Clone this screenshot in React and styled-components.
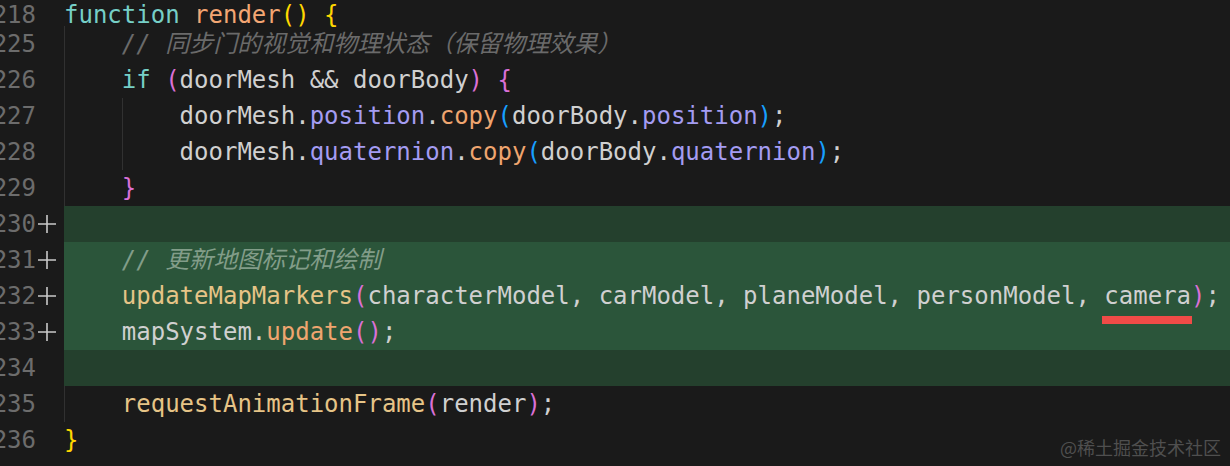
import React from 'react';
import styled, { createGlobalStyle } from 'styled-components';

const GlobalStyle = createGlobalStyle`
  html, body {
    margin: 0;
    padding: 0;
    background: #1a1a1a;
    overflow: hidden;
  }
`;

const colors = {
  fg: '#d0d0d0',
  kw: '#76cfc7',
  fn: '#f3a673',
  method: '#efa56f',
  call: '#e6c487',
  prop: '#a49cf2',
  b1: '#ffd700',
  b2: '#da70d6',
  b3: '#179fff',
};

const Editor = styled.div`
  position: relative;
  width: 1230px;
  height: 466px;
  overflow: hidden;
  background: #1a1a1a;
  font-family: 'DejaVu Sans Mono', 'Noto Sans CJK SC', monospace;
  font-size: 24px;
  color: ${colors.fg};
`;

const Line = styled.div`
  display: flex;
  height: ${(p) => (p.$sticky ? 26 : 36)}px;
  line-height: ${(p) => (p.$sticky ? 30 : 36)}px;
  white-space: pre;
`;

const Gutter = styled.div`
  display: flex;
  width: 64px;
  flex-shrink: 0;
`;

const Num = styled.div`
  display: flex;
  justify-content: flex-end;
  width: 36px;
  color: #6c6c6c;
`;

const Marker = styled.div`
  display: flex;
  align-items: center;
  justify-content: center;
  width: 22px;
`;

const Code = styled.div`
  flex: 1;
  background: ${(p) =>
    p.$diff === 'add' ? '#2b553a' : p.$diff === 'dim' ? '#24402d' : 'transparent'};
`;

const Indent = styled.span`
  display: inline-block;
  vertical-align: top;
  width: 4ch;
  height: 36px;
  box-sizing: border-box;
  border-left: 1px solid ${(p) => (p.$on ? 'rgba(255,255,255,0.1)' : 'transparent')};
`;

const Tok = styled.span`
  color: ${(p) => colors[p.$t] || colors.fg};
`;

const Comment = styled.span`
  font-style: italic;
  color: ${(p) => (p.$onGreen ? '#829d89' : '#6a6a6a')};
`;

const Mark = styled.span`
  position: relative;
  display: inline-block;
  vertical-align: top;
  height: 36px;

  &::after {
    content: '';
    position: absolute;
    left: -2px;
    right: -1px;
    top: 38px;
    height: 8px;
    background: #f04b47;
  }
`;

const Watermark = styled.div`
  position: absolute;
  right: 9px;
  bottom: 6px;
  font-family: 'Noto Sans CJK SC', sans-serif;
  font-size: 18px;
  color: #4f4f4f;
`;

function Plus() {
  return (
    <svg width="18" height="18" viewBox="0 0 18 18">
      <path d="M0 9h18M9 0v18" stroke="#c9c9c9" strokeWidth="1.6" fill="none" />
    </svg>
  );
}

const lines = [
  { n: 218, sticky: true, indent: 0, tokens: [['kw', 'function'], ['fg', ' '], ['fn', 'render'], ['b1', '()'], ['fg', ' '], ['b1', '{']] },
  { n: 225, indent: 1, tokens: [['cm', '// 同步门的视觉和物理状态（保留物理效果）']] },
  { n: 226, indent: 1, tokens: [['kw', 'if'], ['fg', ' '], ['b2', '('], ['fg', 'doorMesh && doorBody'], ['b2', ')'], ['fg', ' '], ['b2', '{']] },
  { n: 227, indent: 2, tokens: [['fg', 'doorMesh.'], ['prop', 'position'], ['fg', '.'], ['method', 'copy'], ['b3', '('], ['fg', 'doorBody.'], ['prop', 'position'], ['b3', ')'], ['fg', ';']] },
  { n: 228, indent: 2, tokens: [['fg', 'doorMesh.'], ['prop', 'quaternion'], ['fg', '.'], ['method', 'copy'], ['b3', '('], ['fg', 'doorBody.'], ['prop', 'quaternion'], ['b3', ')'], ['fg', ';']] },
  { n: 229, indent: 1, tokens: [['b2', '}']] },
  { n: 230, indent: 1, diff: 'dim', added: true, tokens: [] },
  { n: 231, indent: 1, diff: 'add', added: true, tokens: [['cm', '// 更新地图标记和绘制']] },
  { n: 232, indent: 1, diff: 'add', added: true, tokens: [['call', 'updateMapMarkers'], ['b2', '('], ['fg', 'characterModel, carModel, planeModel, personModel, '], ['mark', 'camera'], ['b2', ')'], ['fg', ';']] },
  { n: 233, indent: 1, diff: 'add', added: true, tokens: [['fg', 'mapSystem.'], ['method', 'update'], ['b2', '()'], ['fg', ';']] },
  { n: 234, indent: 1, diff: 'dim', tokens: [] },
  { n: 235, indent: 1, tokens: [['call', 'requestAnimationFrame'], ['b2', '('], ['fg', 'render'], ['b2', ')'], ['fg', ';']] },
  { n: 236, indent: 0, tokens: [['b1', '}']] },
];

function renderToken([t, text], i, onGreen) {
  if (t === 'cm') return <Comment key={i} $onGreen={onGreen}>{text}</Comment>;
  if (t === 'mark') return <Mark key={i}>{text}</Mark>;
  return <Tok key={i} $t={t}>{text}</Tok>;
}

export default function App() {
  return (
    <Editor>
      <GlobalStyle />
      {lines.map((line) => (
        <Line key={line.n} $sticky={line.sticky}>
          <Gutter>
            <Num>{line.n}</Num>
            <Marker>{line.added && <Plus />}</Marker>
          </Gutter>
          <Code $diff={line.diff}>
            {Array.from({ length: line.indent }).map((_, i) => (
              <Indent key={i} $on={!line.diff} />
            ))}
            {line.tokens.map((tok, i) => renderToken(tok, i, !!line.diff))}
          </Code>
        </Line>
      ))}
      <Watermark>@稀土掘金技术社区</Watermark>
    </Editor>
  );
}
